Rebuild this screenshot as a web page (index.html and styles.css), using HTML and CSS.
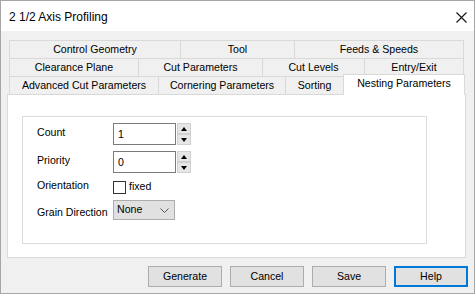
FILE: index.html
```html
<!DOCTYPE html>
<html>
<head>
<meta charset="utf-8">
<link rel="stylesheet" href="styles.css">
</head>
<body>
<div class="window">
  <div class="titlebar">
    <span class="title">2 1/2 Axis Profiling</span>
    <svg class="close" width="11" height="11" viewBox="0 0 11 11"><path d="M0.5 0.5 L10.5 10.5 M10.5 0.5 L0.5 10.5" stroke="#111" stroke-width="1.1" fill="none"/></svg>
  </div>
  <div class="content">
    <div class="tabs">
      <div class="row">
        <div class="tab w-cg">Control Geometry</div>
        <div class="tab w-tool">Tool</div>
        <div class="tab w-fs">Feeds &amp; Speeds</div>
      </div>
      <div class="row">
        <div class="tab w-cp">Clearance Plane</div>
        <div class="tab w-cutp">Cut Parameters</div>
        <div class="tab w-cl">Cut Levels</div>
        <div class="tab w-ee">Entry/Exit</div>
      </div>
      <div class="row row-last">
        <div class="tab w-acp">Advanced Cut Parameters</div>
        <div class="tab w-cor">Cornering Parameters</div>
        <div class="tab w-sort">Sorting</div>
        <div class="tab tab-active w-nest">Nesting Parameters</div>
      </div>
    </div>
    <div class="page">
      <div class="group">
        <div class="form">
          <div class="lbl">Count</div>
          <div class="field">
            <div class="input">1</div>
            <div class="spin">
              <div class="spin-btn"><span class="tri-up"></span></div>
              <div class="spin-btn"><span class="tri-down"></span></div>
            </div>
          </div>
          <div class="lbl">Priority</div>
          <div class="field">
            <div class="input">0</div>
            <div class="spin">
              <div class="spin-btn"><span class="tri-up"></span></div>
              <div class="spin-btn"><span class="tri-down"></span></div>
            </div>
          </div>
          <div class="lbl lbl-orient">Orientation</div>
          <div class="field check-field">
            <span class="checkbox"></span><span class="check-text">fixed</span>
          </div>
          <div class="lbl lbl-grain">Grain Direction</div>
          <div class="field">
            <div class="select">
              <span>None</span>
              <svg width="9" height="5" viewBox="0 0 9 5"><path d="M0.5 0.5 L4.5 4.5 L8.5 0.5" stroke="#555" stroke-width="1" fill="none"/></svg>
            </div>
          </div>
        </div>
      </div>
    </div>
    <div class="buttons">
      <div class="btn">Generate</div>
      <div class="btn">Cancel</div>
      <div class="btn">Save</div>
      <div class="btn btn-default">Help</div>
    </div>
  </div>
</div>
</body>
</html>
```

FILE: styles.css
```css
html, body {
  margin: 0;
  padding: 0;
  background: #ffffff;
}
body {
  font-family: "Liberation Sans", Arial, sans-serif;
  font-size: 10.6px;
  color: #000;
}
.window {
  width: 475px;
  height: 294px;
  box-sizing: border-box;
  border: 1px solid #a6a6a6;
  background: #f0f0f0;
  display: flex;
  flex-direction: column;
}
.titlebar {
  height: 30px;
  flex: none;
  background: #ffffff;
  display: flex;
  align-items: center;
  justify-content: space-between;
  padding: 0 7px 0 8px;
}
.title {
  font-size: 12px;
  padding-top: 1px;
}
.close {
  display: block;
  margin-top: 2px;
}
.content {
  padding: 9px 8px 0 6px;
}
.tabs {
  padding-left: 2px;
}
.row {
  display: flex;
  height: 18px;
}
.row-last {
  align-items: flex-start;
}
.tab {
  box-sizing: border-box;
  height: 18px;
  flex: none;
  border: 1px solid #d9d9d9;
  border-bottom: none;
  margin-left: -1px;
  display: flex;
  align-items: center;
  justify-content: center;
  line-height: 13px;
  padding-bottom: 1px;
  background: #f0f0f0;
}
.tab:first-child {
  margin-left: 0;
}
.tab-active {
  position: relative;
  z-index: 1;
  background: #ffffff;
  height: 21px;
  margin-top: -2px;
  padding-bottom: 4px;
}
.w-cg { width: 172px; }
.w-tool { width: 115px; }
.w-fs { width: 170px; }
.w-cp { width: 130px; }
.w-cutp { width: 125px; }
.w-cl { width: 103px; }
.w-ee { width: 100px; }
.w-acp { width: 150px; }
.w-cor { width: 128px; }
.w-sort { width: 59px; }
.w-nest { width: 122px; }
.page {
  box-sizing: border-box;
  width: 459px;
  height: 164px;
  border: 1px solid #d9d9d9;
  background: #ffffff;
  padding: 21px 0 0 14px;
}
.group {
  box-sizing: border-box;
  width: 405px;
  height: 128px;
  border: 1px solid #dcdcdc;
  padding: 6px 0 0 14px;
}
.form {
  display: grid;
  grid-template-columns: 76px auto;
  grid-template-rows: 22px 22px 15px 20px;
  row-gap: 6px;
  align-items: start;
}
.lbl {
  line-height: 13px;
  padding-top: 3px;
}
.lbl-orient {
  padding-top: 0;
}
.lbl-grain {
  padding-top: 6px;
}
.field {
  display: flex;
  align-items: flex-start;
}
.input {
  box-sizing: border-box;
  width: 63px;
  height: 22px;
  border: 1px solid #7a7a7a;
  background: #fff;
  padding: 4px 0 0 4px;
  line-height: 13px;
}
.spin {
  margin-left: 1px;
  display: flex;
  flex-direction: column;
  gap: 0;
  height: 22px;
  justify-content: space-between;
}
.spin-btn {
  box-sizing: border-box;
  width: 14px;
  height: 11px;
  background: #e6e6e6;
  border: 1px solid #d0d0d0;
  display: flex;
  align-items: center;
  justify-content: center;
}
.tri-up {
  width: 0;
  height: 0;
  border-left: 3.5px solid transparent;
  border-right: 3.5px solid transparent;
  border-bottom: 4px solid #000;
}
.tri-down {
  width: 0;
  height: 0;
  border-left: 3.5px solid transparent;
  border-right: 3.5px solid transparent;
  border-top: 4px solid #000;
}
.check-field {
  align-items: center;
  height: 15px;
}
.checkbox {
  box-sizing: border-box;
  width: 13px;
  height: 13px;
  border: 1px solid #333;
  background: #fff;
  margin-top: 1px;
}
.check-text {
  margin-left: 3px;
  line-height: 13px;
}
.select {
  box-sizing: border-box;
  width: 62px;
  height: 20px;
  background: #e1e1e1;
  border: 1px solid #adadad;
  display: flex;
  align-items: center;
  justify-content: space-between;
  padding: 0 5px 1px 3px;
  line-height: 13px;
}
.select svg {
  display: block;
  margin-top: 1px;
}
.buttons {
  display: flex;
  justify-content: flex-end;
  gap: 8px;
  margin-top: 8px;
  margin-right: -2px;
}
.btn {
  box-sizing: border-box;
  width: 74px;
  height: 21px;
  background: #e1e1e1;
  border: 1px solid #adadad;
  display: flex;
  align-items: center;
  justify-content: center;
  line-height: 13px;
}
.btn-default {
  border: 2px solid #0078d7;
}
```
